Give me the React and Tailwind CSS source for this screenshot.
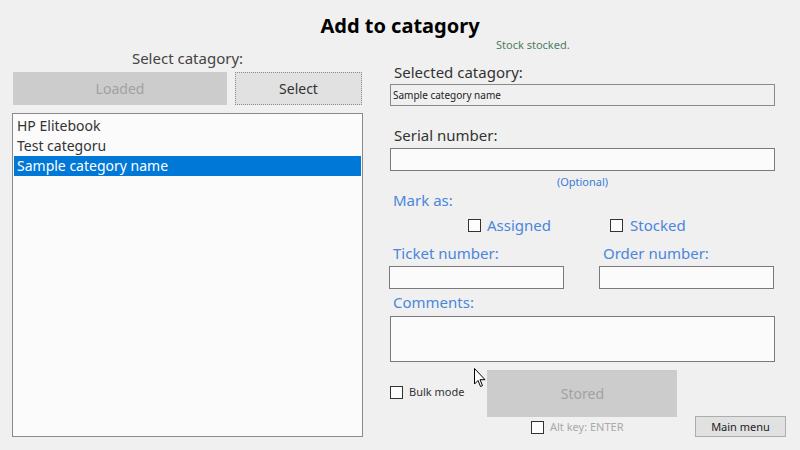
import React from "react";

const font = { fontFamily: '"Noto Sans", "Open Sans", sans-serif' };

function Check({ className = "" }) {
  return <span className={"inline-block w-[13px] h-[13px] bg-[#fdfdfd] border border-[#333] " + className}></span>;
}

function Cursor() {
  return (
    <svg className="absolute left-[474px] top-[368px]" width="12" height="20" viewBox="0 0 12 20">
      <path d="M0.5 0.5 L0.5 16 L4 12.5 L6.5 18.5 L8.5 17.6 L6 11.7 L11 11.7 Z" fill="#fff" stroke="#000" strokeWidth="1" />
    </svg>
  );
}

export default function App() {
  return (
    <div className="relative w-[800px] h-[450px] bg-[#f0f0f0] overflow-hidden text-[#333]" style={font}>
      <div className="h-[38px] pt-[12px] text-center text-[20px] leading-[28px] font-bold text-black">
        Add to catagory
      </div>

      <div className="flex">
        {/* left side */}
        <div className="ml-[12px] w-[351px] flex flex-col">
          <div className="mt-[10px] h-[20px] text-center text-[15px] leading-[20px] text-[#444]">Select catagory:</div>
          <div className="mt-[4px] flex gap-[8px] h-[33px]">
            <button className="ml-[1px] w-[214px] bg-[#cccccc] text-[#a2a2a2] text-[14px]">Loaded</button>
            <button className="w-[127px] bg-[#e1e1e1] border border-dotted border-[#8c8c8c] text-[#333] text-[14px]">Select</button>
          </div>
          <div className="mt-[8px] h-[324px] bg-[#fbfbfb] border border-[#8a8a8a] pt-[2px] px-[1px] text-[14px] leading-[20px]">
            <div className="px-[3px]">HP Elitebook</div>
            <div className="px-[3px]">Test categoru</div>
            <div className="px-[3px] bg-[#0078d7] text-white">Sample category name</div>
          </div>
        </div>

        {/* right side */}
        <div className="ml-[26px] w-[397px] flex flex-col">
          <div className="ml-[107px] h-[14px] text-[11px] leading-[14px] text-[#4b7d5f]">Stock stocked.</div>
          <div className="mt-[10px] pl-[5px] h-[20px] text-[15px] leading-[20px]">Selected catagory:</div>
          <div className="mt-[2px] ml-[1px] w-[385px] h-[22px] border border-[#8a8a8a] bg-[#f0f0f0] px-[2px] text-[10px] leading-[20px] text-[#222]">
            Sample category name
          </div>
          <div className="mt-[19px] pl-[5px] h-[20px] text-[15px] leading-[20px]">Serial number:</div>
          <div className="mt-[3px] ml-[1px] w-[385px] h-[23px] border border-[#7a7a7a] bg-[#fbfbfb]"></div>
          <div className="mt-[4px] ml-[1px] w-[385px] h-[14px] text-center text-[11px] leading-[14px] text-[#3b7bd9]">(Optional)</div>
          <div className="mt-[1px] pl-[4px] h-[20px] text-[15px] leading-[20px] text-[#4a86dc]">Mark as:</div>
          <div className="mt-[5px] h-[20px] flex items-center text-[15px] leading-[20px] text-[#4a86dc]">
            <Check className="ml-[79px]" />
            <span className="ml-[6px]">Assigned</span>
            <Check className="ml-[59px]" />
            <span className="ml-[7px]">Stocked</span>
          </div>
          <div className="mt-[8px] h-[20px] flex text-[15px] leading-[20px] text-[#4a86dc]">
            <span className="pl-[4px] w-[214px]">Ticket number:</span>
            <span>Order number:</span>
          </div>
          <div className="mt-[3px] flex h-[23px]">
            <div className="w-[175px] border border-[#7a7a7a] bg-[#fbfbfb]"></div>
            <div className="ml-[35px] w-[175px] border border-[#7a7a7a] bg-[#fbfbfb]"></div>
          </div>
          <div className="mt-[3px] pl-[4px] h-[20px] text-[15px] leading-[20px] text-[#4a86dc]">Comments:</div>
          <div className="mt-[4px] ml-[1px] w-[385px] h-[46px] border border-[#7a7a7a] bg-[#fbfbfb]"></div>
          <div className="mt-[8px] flex items-center h-[47px]">
            <Check className="ml-[1px] mt-[-2px]" />
            <span className="ml-[6px] mt-[-2px] text-[11px] text-[#333]">Bulk mode</span>
            <button className="ml-[23px] w-[190px] h-[47px] bg-[#cccccc] text-[#a2a2a2] text-[14px]">Stored</button>
          </div>
          <div className="mt-[-1px] flex items-start h-[21px]">
            <Check className="ml-[142px] mt-[5px]" />
            <span className="ml-[6px] mt-[2px] text-[11px] leading-[18px] text-[#a9a9a9]">Alt key: ENTER</span>
            <button className="ml-auto w-[91px] h-[21px] bg-[#e1e1e1] border border-[#adadad] text-[11px] leading-[18px] text-[#222]">Main menu</button>
          </div>
        </div>
      </div>

      <Cursor />
    </div>
  );
}
